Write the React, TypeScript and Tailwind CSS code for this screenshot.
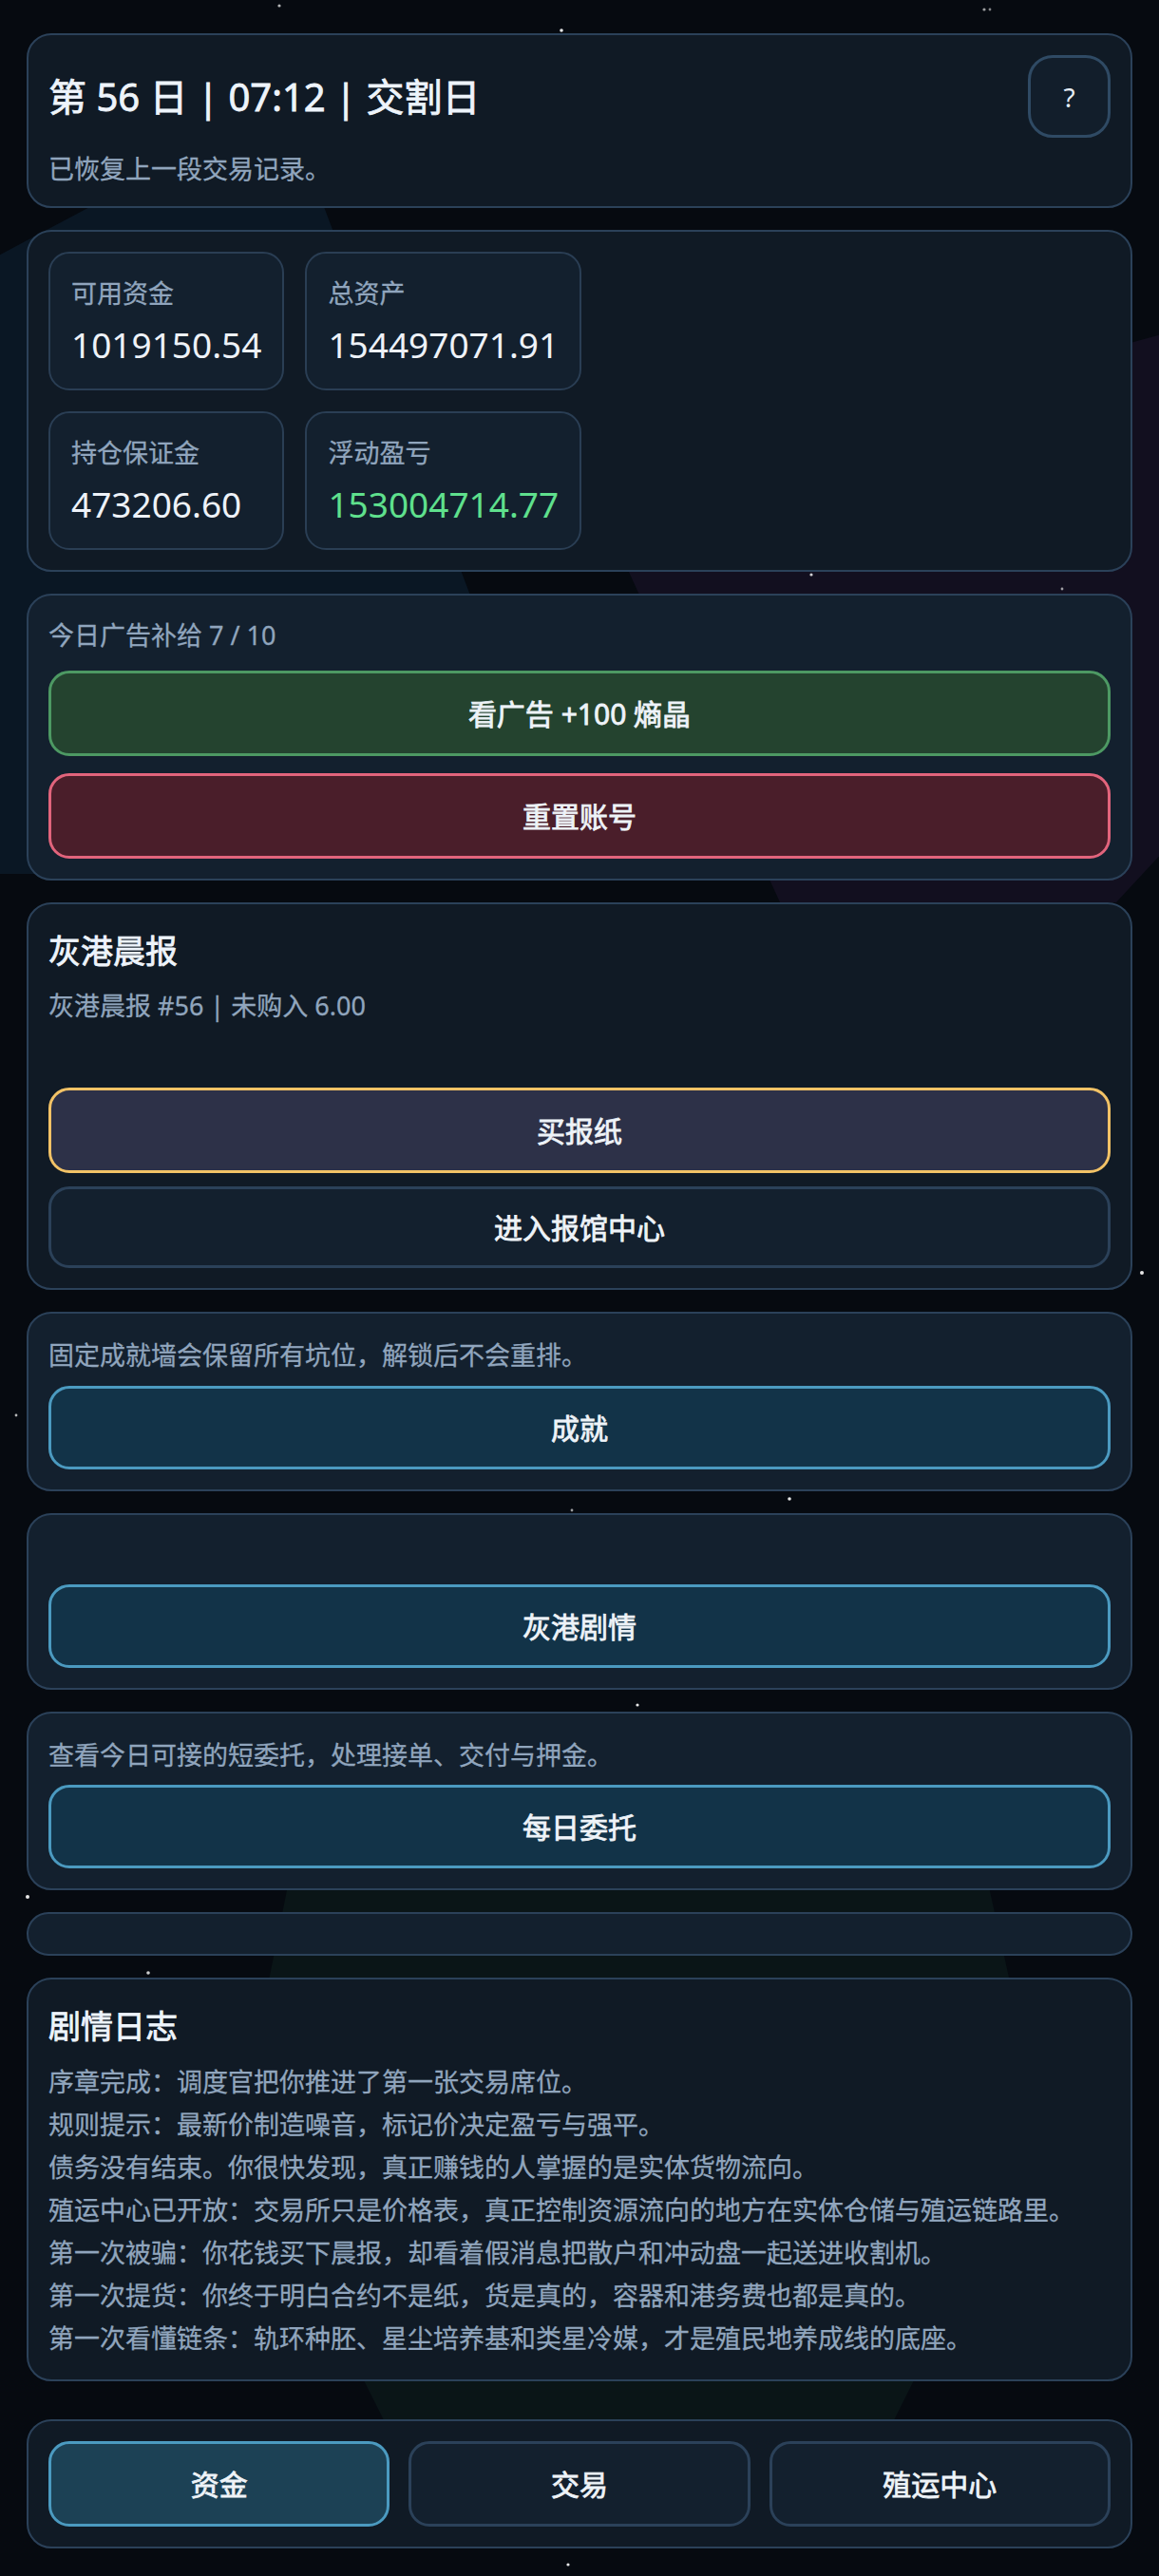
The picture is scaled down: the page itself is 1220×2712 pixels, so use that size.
import React from "react";

const font = { fontFamily: '"Noto Sans", "Noto Sans CJK SC", sans-serif' };

const stars = [
  [294, 6, 1.6, 0.7],
  [1036, 10, 1.6, 0.6],
  [1042, 10, 1.4, 0.5],
  [591, 32, 1.8, 0.9],
  [854, 605, 1.6, 0.8],
  [1118, 620, 1.4, 0.6],
  [1202, 1340, 2, 0.9],
  [17, 1490, 1.4, 0.7],
  [831, 1578, 1.8, 0.9],
  [602, 1590, 1.4, 0.6],
  [671, 1795, 1.6, 0.9],
  [29, 1997, 2, 0.9],
  [156, 2077, 1.8, 0.8],
  [598, 2700, 1.6, 0.9],
];

function Backdrop() {
  return (
    <svg
      className="pointer-events-none absolute inset-0 h-full w-full"
      viewBox="0 0 1220 2712"
      preserveAspectRatio="none"
      aria-hidden
    >
      <polygon points="100,215 340,215 500,640 300,920 -120,920 -60,300" fill="#0a1724" />
      <polygon points="1230,350 1240,880 1175,950 821,950 661,600 900,440" fill="#120f1f" />
      <polygon points="320,1900 1022,1900 1066,2100 1060,2300 975,2480 905,2620 440,2620 370,2480 280,2300 280,2100" fill="#0a1517" />
      {stars.map(([x, y, r, o], i) => (
        <circle key={i} cx={x} cy={y} r={r} fill="#ffffff" opacity={o} />
      ))}
    </svg>
  );
}

// semi-heavy look without jumping to the bold cut
const heavy = "font-normal [-webkit-text-stroke:0.8px_currentColor]";
const muted = "text-[27px] text-[#90a5bd] [-webkit-text-stroke:0.3px_currentColor]";

const darkCard = "rounded-[26px] border-2 border-[#2b4159] bg-[#101a25] p-[21px]";
const panelCard = "rounded-[26px] border-2 border-[#2b4159] bg-[#13202e] p-[21px]";
const btn = `flex w-full items-center justify-center rounded-[22px] border-[3px] text-[30px] text-[#eef3f8] ${heavy}`;
const tealBtn = `${btn} border-[#4b9ac0] bg-[#123348]`;

function Stat({ label, value, green }: { label: string; value: string; green?: boolean }) {
  return (
    <div className="rounded-[22px] border-2 border-[#2a3e54] bg-[#13202e] px-[22px] pt-[22px] pb-[18px]">
      <div className={`${muted} leading-[39px]`}>{label}</div>
      <div
        className={`mt-[6px] text-[37px] leading-[57px] ${green ? "text-[#5fe08d]" : "text-[#eef2f8]"}`}
      >
        {value}
      </div>
    </div>
  );
}

const logLines = [
  "序章完成：调度官把你推进了第一张交易席位。",
  "规则提示：最新价制造噪音，标记价决定盈亏与强平。",
  "债务没有结束。你很快发现，真正赚钱的人掌握的是实体货物流向。",
  "殖运中心已开放：交易所只是价格表，真正控制资源流向的地方在实体仓储与殖运链路里。",
  "第一次被骗：你花钱买下晨报，却看着假消息把散户和冲动盘一起送进收割机。",
  "第一次提货：你终于明白合约不是纸，货是真的，容器和港务费也都是真的。",
  "第一次看懂链条：轨环种胚、星尘培养基和类星冷媒，才是殖民地养成线的底座。",
];

export default function App() {
  return (
    <div className="relative min-h-[2712px] overflow-hidden bg-[#060a10]" style={font}>
      <Backdrop />
      <div className="relative flex flex-col gap-[23px] px-[28px] pt-[35px] pb-[29px]">
        {/* header */}
        <section className={darkCard}>
          <div className="flex items-center justify-between">
            <h1 className={`text-[40px] leading-[60px] text-[#eef4fb] ${heavy}`}>
              第 56 日 | 07:12 | 交割日
            </h1>
            <button className="flex h-[87px] w-[87px] items-center justify-center rounded-[26px] border-[3px] border-[#2f4a64] bg-[#121e2b] text-[28px] text-[#e6edf5]">
              ?
            </button>
          </div>
          <p className={`mt-[15px] leading-[36px] ${muted}`}>已恢复上一段交易记录。</p>
        </section>

        {/* stats */}
        <section className={darkCard}>
          <div className="grid grid-cols-[auto_auto] justify-start gap-[22px]">
            <Stat label="可用资金" value="1019150.54" />
            <Stat label="总资产" value="154497071.91" />
            <Stat label="持仓保证金" value="473206.60" />
            <Stat label="浮动盈亏" value="153004714.77" green />
          </div>
        </section>

        {/* ads */}
        <section className={panelCard}>
          <p className={`leading-[42px] ${muted}`}>今日广告补给 7 / 10</p>
          <button className={`${btn} mt-[16px] h-[90px] border-[#4d9963] bg-[#24432f]`}>看广告 +100 熵晶</button>
          <button className={`${btn} mt-[18px] h-[90px] border-[#e2647c] bg-[#4a1e2a]`}>重置账号</button>
        </section>

        {/* newspaper */}
        <section className={darkCard}>
          <h2 className={`mt-[4px] text-[34px] leading-[48px] text-[#eef4fb] ${heavy}`}>灰港晨报</h2>
          <p className={`mt-[14px] leading-[39px] ${muted}`}>灰港晨报 #56 | 未购入 6.00</p>
          <button className={`${btn} mt-[67px] h-[90px] border-[#f2c266] bg-[#2d3148]`}>买报纸</button>
          <button className={`${btn} mt-[14px] h-[86px] border-[#2b4159] bg-[#13202e]`}>进入报馆中心</button>
        </section>

        {/* achievements */}
        <section className={panelCard}>
          <p className={`leading-[45px] ${muted}`}>固定成就墙会保留所有坑位，解锁后不会重排。</p>
          <button className={`${tealBtn} mt-[10px] h-[88px]`}>成就</button>
        </section>

        {/* story */}
        <section className={panelCard}>
          <p className="h-[42px]" />
          <button className={`${tealBtn} mt-[10px] h-[88px]`}>灰港剧情</button>
        </section>

        {/* daily */}
        <section className={panelCard}>
          <p className={`leading-[45px] ${muted}`}>查看今日可接的短委托，处理接单、交付与押金。</p>
          <button className={`${tealBtn} mt-[9px] h-[88px]`}>每日委托</button>
        </section>

        <section className={panelCard} />

        {/* log */}
        <section className={darkCard}>
          <h2 className={`mt-[4px] text-[34px] leading-[48px] text-[#eef4fb] ${heavy}`}>剧情日志</h2>
          <div className="mt-[12px]">
            {logLines.map((line) => (
              <p key={line} className={`leading-[45px] ${muted}`}>
                {line}
              </p>
            ))}
          </div>
        </section>

        {/* nav */}
        <nav className={`${darkCard} mt-[17px] grid grid-cols-3 gap-[20px]`}>
          <button className={`${btn} h-[90px] border-[#4b9ac0] bg-[#1c4155]`}>资金</button>
          <button className={`${btn} h-[90px] border-[#2b4159] bg-[#13202e]`}>交易</button>
          <button className={`${btn} h-[90px] border-[#2b4159] bg-[#13202e]`}>殖运中心</button>
        </nav>
      </div>
    </div>
  );
}
